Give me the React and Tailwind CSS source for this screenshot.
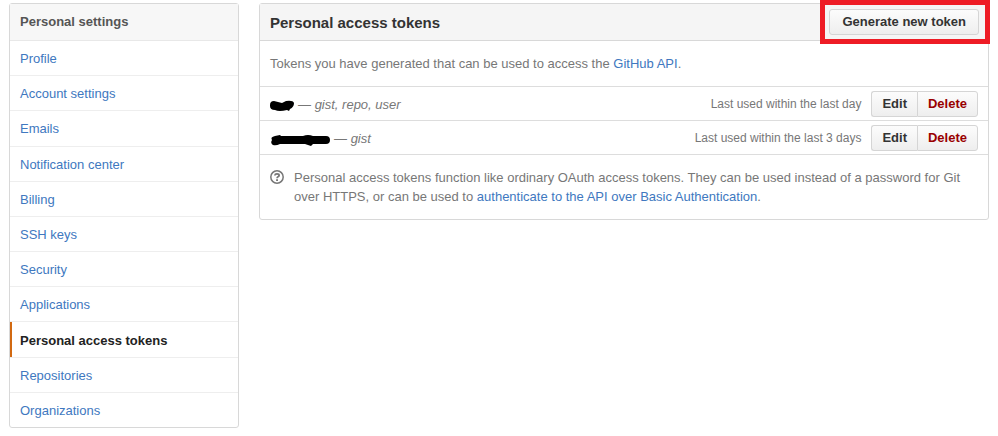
const links = [
  'Profile',
  'Account settings',
  'Emails',
  'Notification center',
  'Billing',
  'SSH keys',
  'Security',
  'Applications',
  'Personal access tokens',
  'Repositories',
  'Organizations',
];

const buttonBase =
  'border border-[#d5d5d5] bg-linear-to-b from-[#fcfcfc] to-[#eeeeee] text-[13px] leading-6 font-bold';

function ShortScribble() {
  return (
    <svg className="mt-1" width="24" height="12" viewBox="0 0 24 12" aria-hidden="true">
      <path d="M0 5 Q0 1 4 1 L8 2 L12 3 L16 1 Q23 0 24 3 Q24 7 20 9 L19 11 L17 10 Q9 12 5 10 Q0 10 0 6 Z" fill="#000" />
    </svg>
  );
}

function LongScribble() {
  return (
    <svg className="mt-1" width="60" height="12" viewBox="0 0 60 12" aria-hidden="true">
      <path d="M5 2 L10 1 L11 2 H33 Q38 0 43 2 H56 Q60 2 60 6 Q60 10 56 10 H43 L41 12 L35 10 H10 Q6 12 3 11 Q0 9 2 6 Q0 3 5 2 Z" fill="#000" />
    </svg>
  );
}

function QuestionIcon() {
  return (
    <svg width="14" height="14" viewBox="0 0 14 14" fill="none" stroke="#777" aria-hidden="true">
      <circle cx="7" cy="7" r="6.2" strokeWidth="1.5" />
      <path d="M4.8 5.5 Q5 3.9 7 3.9 Q9.1 3.9 9.1 5.4 Q9.1 6.3 8 6.8 Q7.1 7.2 7.1 8.3" strokeWidth="1.8" />
      <path d="M6.1 10.1 H8" strokeWidth="1.8" />
    </svg>
  );
}

function TokenRow({ scribble, scopes, used }) {
  return (
    <li className="flex items-center border-b border-[#ddd] px-[10px] pt-1 pb-[3px]">
      {scribble}
      <em className="ml-1 grow">— {scopes}</em>
      <span className="mr-[10px] text-[12px]">{used}</span>
      <div className="flex">
        <button type="button" className={`${buttonBase} rounded-l-[3px] border-r-0 px-[10px] text-[#333]`}>
          Edit
        </button>
        <button type="button" className={`${buttonBase} rounded-r-[3px] px-[10px] text-[#900]`}>
          Delete
        </button>
      </div>
    </li>
  );
}

export default function App() {
  return (
    <div className="flex items-start gap-5 bg-white px-[9px] pt-[3px] font-['Liberation_Sans',Arial,sans-serif] text-[13px] leading-[19px] text-[#777]">
      <nav className="w-[230px] shrink-0 rounded-[3px] border border-[#d8d8d8]" aria-labelledby="settings-title">
        <h2 id="settings-title" className="border-b border-[#e8e8e8] bg-[#f7f7f7] px-[10px] py-[8px] text-[13px] leading-5 font-bold text-[#555]">
          Personal settings
        </h2>
        <ul className="-mb-px grid min-h-[387px] auto-rows-fr">
          {links.map((label) => {
            const current = label === 'Personal access tokens';
            return (
              <li key={label} className="flex border-b border-[#eee] last:border-transparent">
                <a
                  href="#"
                  aria-current={current ? 'page' : undefined}
                  className={
                    current
                      ? 'flex grow items-center border-l-2 border-[#d26911] pt-px pl-2 font-bold text-[#222]'
                      : 'flex grow items-center pt-px pl-[10px] text-[#4078c0]'
                  }
                >
                  {label}
                </a>
              </li>
            );
          })}
        </ul>
      </nav>

      <main className="min-w-0 grow rounded-[3px] border border-[#d8d8d8]">
        <header className="flex items-center justify-between border-b border-[#d8d8d8] bg-[#f5f5f5] py-[5px] pr-[9px] pl-[10px]">
          <h1 className="text-[15px] font-bold text-[#333]">Personal access tokens</h1>
          <div className="relative flex">
            <button type="button" className={`${buttonBase} rounded-[3px] px-3 text-[#333]`}>
              Generate new token
            </button>
            <div className="pointer-events-none absolute -top-[9px] -right-[11px] -bottom-[9px] -left-[9px] border-5 border-[#ee1c25]" />
          </div>
        </header>
        <p className="border-b border-[#ddd] px-[10px] py-[13px]">
          Tokens you have generated that can be used to access the{' '}
          <a href="#" className="text-[#4078c0]">GitHub API</a>.
        </p>
        <ul>
          <TokenRow scribble={<ShortScribble />} scopes="gist, repo, user" used="Last used within the last day" />
          <TokenRow scribble={<LongScribble />} scopes="gist" used="Last used within the last 3 days" />
        </ul>
        <div className="flex gap-[10px] px-[10px] py-[13px]">
          <span className="pt-[2px]">
            <QuestionIcon />
          </span>
          <p>
            Personal access tokens function like ordinary OAuth access tokens. They can be used instead of a password for Git
            over HTTPS, or can be used to{' '}
            <a href="#" className="text-[#4078c0]">authenticate to the API over Basic Authentication</a>.
          </p>
        </div>
      </main>
    </div>
  );
}
